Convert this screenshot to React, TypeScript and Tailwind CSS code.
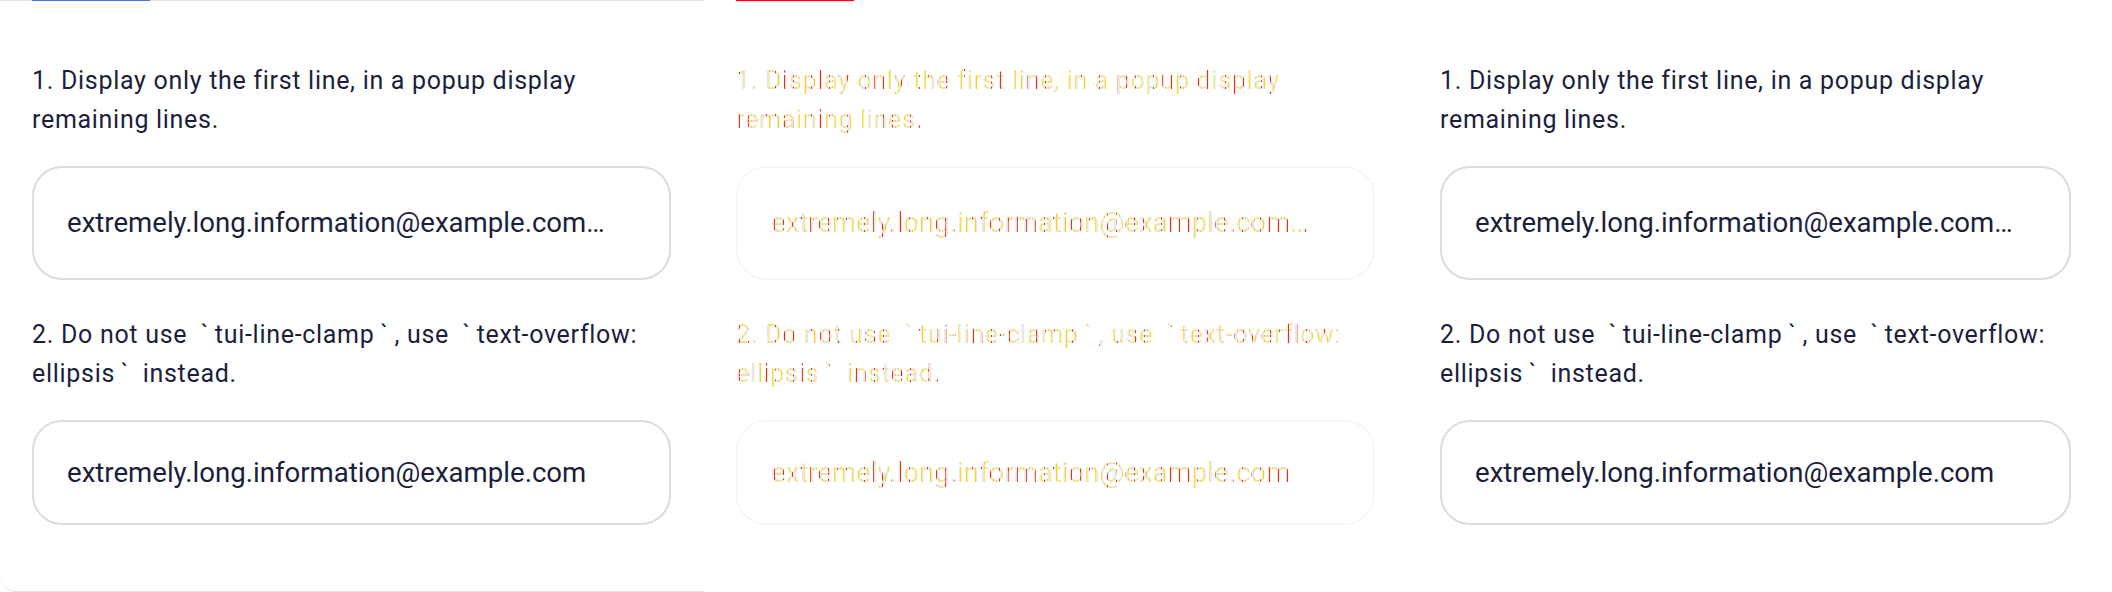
import React from "react";

type Variant = "expected" | "diff" | "actual";

const font = { fontFamily: "Roboto, 'Noto Sans', sans-serif" };

function Field({ text, tall, variant }: { text: string; tall?: boolean; variant: Variant }) {
  const border = variant === "diff" ? "border-[#f6f6f6]" : "border-[#dcdcdc]";
  return (
    <div
      className={`flex items-center rounded-[30px] border-2 ${border} px-[33px] ${
        tall ? "h-[114px]" : "h-[105px]"
      }`}
    >
      <span className={`truncate text-[27.6px] ${variant === "diff" ? "diff-text" : "text-[#1b1f3b]"}`}>{text}</span>
    </div>
  );
}

function Note({ children, variant }: { children: React.ReactNode; variant: Variant }) {
  return (
    <p
      className={`text-[25px] leading-[39px] tracking-[0.7px] ${
        variant === "diff" ? "diff-text" : "text-[#1b1f3b]"
      }`}
    >
      {children}
    </p>
  );
}

function Panel({ variant }: { variant: Variant }) {
  const isLeft = variant === "expected";
  return (
    <div
      className={`flex w-[704px] shrink-0 flex-col ${
        isLeft ? "rounded-bl-[16px] border-b border-[#e4e4e4]" : ""
      }`}
    >
      {/* tab underline */}
      <div className={`h-px ${isLeft ? "bg-[#e4e4e4]" : "bg-white"}`}>
        {variant !== "actual" && (
          <div className={`ml-8 h-px w-[118px] ${isLeft ? "bg-[#526ed3]" : "bg-[#ff0000]"}`} />
        )}
      </div>
      <div className={`flex flex-col pl-8 ${variant === "actual" ? "pr-[41px]" : "pr-[33px]"} pt-[60px]`}>
        <Note variant={variant}>
          1. Display only the first line, in a popup display
          <br />
          remaining lines.
        </Note>
        <div className="mt-[27px]">
          <Field variant={variant} tall text="extremely.long.information@example.com…" />
        </div>
        <div className="mt-[35px]">
          <Note variant={variant}>
            {"2. Do not use\u2002`\u2009tui-line-clamp\u2009`\u2009, use\u2002`\u2009text-overflow:"}
            <br />
            {"ellipsis\u2009`\u2002instead."}
          </Note>
        </div>
        <div className="mt-[27px]">
          <Field variant={variant} text="extremely.long.information@example.com" />
        </div>
      </div>
    </div>
  );
}

export default function App() {
  return (
    <div className="flex h-[592px] w-[2112px] overflow-hidden bg-white" style={font}>
      <style>{`.diff-text{color:transparent;background:repeating-linear-gradient(90deg,#ffe600 0 1px,#e6e6e6 1px 3px,#ff2a00 3px 4px,#e6e6e6 4px 6px,#ffd400 6px 7px,#e6e6e6 7px 9px);-webkit-background-clip:text;background-clip:text;}`}</style>
      <Panel variant="expected" />
      <Panel variant="diff" />
      <Panel variant="actual" />
    </div>
  );
}
